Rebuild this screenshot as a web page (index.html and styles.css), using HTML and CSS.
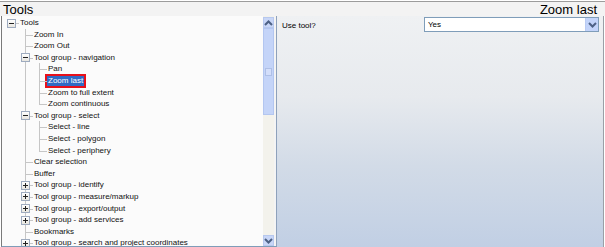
FILE: index.html
```html
<!DOCTYPE html>
<html>

<head>
    <meta charset="UTF-8">
    <title>Tools</title>
    <link rel="stylesheet" href="styles.css">
</head>

<body>
    <div class="window">
        <div class="header">
            <span>Tools</span>
            <span>Zoom last</span>
        </div>
        <div class="main">
            <div class="tree-pane">
                <div class="tree-view">
                    <ul class="tree">
                        <li><span class="exp"></span><span class="row">Tools</span>
                            <ul>
                                <li><span class="row">Zoom In</span></li>
                                <li><span class="row">Zoom Out</span></li>
                                <li><span class="exp"></span><span class="row">Tool group - navigation</span>
                                    <ul>
                                        <li><span class="row">Pan</span></li>
                                        <li><span class="row"><span class="selected">Zoom last</span></span></li>
                                        <li><span class="row">Zoom to full extent</span></li>
                                        <li><span class="row">Zoom continuous</span></li>
                                    </ul>
                                </li>
                                <li><span class="exp"></span><span class="row">Tool group - select</span>
                                    <ul>
                                        <li><span class="row">Select - line</span></li>
                                        <li><span class="row">Select - polygon</span></li>
                                        <li><span class="row">Select - periphery</span></li>
                                    </ul>
                                </li>
                                <li><span class="row">Clear selection</span></li>
                                <li><span class="row">Buffer</span></li>
                                <li><span class="exp plus"></span><span class="row">Tool group - identify</span></li>
                                <li><span class="exp plus"></span><span class="row">Tool group - measure/markup</span></li>
                                <li><span class="exp plus"></span><span class="row">Tool group - export/output</span></li>
                                <li><span class="exp plus"></span><span class="row">Tool group - add services</span></li>
                                <li><span class="row">Bookmarks</span></li>
                                <li class="more"><span class="exp plus"></span><span class="row">Tool group - search and project coordinates</span></li>
                            </ul>
                        </li>
                    </ul>
                </div>
                <div class="scrollbar">
                    <div class="sb-btn">
                        <svg width="9" height="6" viewBox="0 0 9 6"><polyline points="1,5 4.5,1.5 8,5" fill="none" stroke="#4d6185" stroke-width="2"/></svg>
                    </div>
                    <div class="sb-thumb"><span class="grip"></span></div>
                    <div class="sb-track"></div>
                    <div class="sb-btn">
                        <svg width="9" height="6" viewBox="0 0 9 6"><polyline points="1,1 4.5,4.5 8,1" fill="none" stroke="#4d6185" stroke-width="2"/></svg>
                    </div>
                </div>
            </div>
            <div class="props">
                <div class="prop-row">
                    <span class="prop-label">Use tool?</span>
                    <div class="combo">
                        <span class="combo-value">Yes</span>
                        <span class="combo-btn">
                            <svg width="9" height="6" viewBox="0 0 9 6"><polyline points="1,1 4.5,4.5 8,1" fill="none" stroke="#4d6185" stroke-width="2"/></svg>
                        </span>
                    </div>
                </div>
            </div>
        </div>
    </div>
</body>

</html>
```

FILE: styles.css
```css
body {
    margin: 0;
    background-color: #fff;
    font-family: "Liberation Sans", Arial, sans-serif;
}

.window {
    width: 605px;
    height: 247px;
    padding-top: 1px;
    box-sizing: border-box;
    display: flex;
    flex-direction: column;
    overflow: hidden;
}

.header {
    height: 14px;
    border-top: 1px solid #9c9c9c;
    background-color: #f3f3f3;
    display: flex;
    justify-content: space-between;
    align-items: center;
    padding: 0 8px 0 3px;
    font-size: 13px;
    color: #000;
}

.main {
    flex: 1;
    display: flex;
    min-height: 0;
}

.tree-pane {
    width: 274px;
    margin-left: 1px;
    border-left: 1px solid #7a7a7a;
    border-right: 1px solid #8ea1bb;
    border-bottom: 1px solid #7f9db9;
    background-color: #fbfbfb;
    display: flex;
}

.tree-view {
    flex: 1;
    overflow: hidden;
    padding: 1px 0 0 3px;
    font-size: 8px;
    color: #111;
}

.tree,
.tree ul {
    list-style: none;
    margin: 0;
    padding: 0;
}

.tree li {
    position: relative;
    padding-left: 14px;
}

.tree li::before {
    content: "";
    position: absolute;
    left: 6px;
    top: 6px;
    width: 8px;
    border-top: 1px solid #c6c6c6;
}

.tree ul > li::after {
    content: "";
    position: absolute;
    left: 6px;
    top: 0;
    bottom: 0;
    border-left: 1px solid #c6c6c6;
}

.tree ul > li:last-child::after {
    bottom: auto;
    height: 6px;
}

.tree ul > li.more::after {
    height: auto;
    bottom: -4px;
}

.row {
    display: block;
    height: 11.6px;
    line-height: 11.6px;
    padding-left: 1px;
    white-space: nowrap;
}

.exp {
    position: absolute;
    left: 2px;
    top: 1.5px;
    width: 7px;
    height: 7px;
    border: 1px solid #9eabbf;
    background: linear-gradient(#fff, #e8e6df);
    z-index: 1;
}

.exp::after {
    content: "";
    position: absolute;
    left: 1px;
    top: 3px;
    width: 5px;
    height: 1px;
    background-color: #222;
}

.exp.plus::before {
    content: "";
    position: absolute;
    left: 3px;
    top: 1px;
    width: 1px;
    height: 5px;
    background-color: #222;
}

.selected {
    display: inline-block;
    margin-left: -1px;
    padding: 0 1px;
    line-height: 10px;
    background-color: #316ac5;
    color: #fff;
    outline: 2px solid #e8101a;
}

.scrollbar {
    width: 11px;
    border-right: 2px solid #f4f4f4;
    background-color: #f3f2ec;
    display: flex;
    flex-direction: column;
    padding-top: 1px;
}

.sb-btn {
    height: 11px;
    background-color: #c8d6f7;
    border: 1px solid #b7c8ee;
    box-sizing: border-box;
    display: flex;
    align-items: center;
    justify-content: center;
}

.sb-thumb {
    height: 87px;
    background-color: #c4d4f8;
    border: 1px solid #b3c6f0;
    box-sizing: border-box;
    display: flex;
    align-items: center;
    justify-content: center;
}

.grip {
    width: 5px;
    height: 6px;
    border: 1px solid #aebfe6;
    background-color: #d3defa;
}

.sb-track {
    flex: 1;
}

.props {
    flex: 1;
    margin-right: 1px;
    border-right: 1px solid #9a9fa6;
    background: linear-gradient(#eff1f3 0%, #e7eaee 35%, #d2dbe7 65%, #c1cfe4 100%);
    padding: 1px 4px 0 5px;
    font-size: 8px;
}

.prop-row {
    display: flex;
    align-items: center;
    justify-content: space-between;
}

.prop-label {
    color: #000;
    padding-top: 1px;
}

.combo {
    width: 175px;
    height: 15px;
    box-sizing: border-box;
    border: 1px solid #7f9db9;
    background-color: #fff;
    display: flex;
    align-items: center;
}

.combo-value {
    flex: 1;
    padding-left: 3px;
}

.combo-btn {
    width: 13px;
    height: 13px;
    background-color: #c3d4fa;
    border-left: 1px solid #b9cbf3;
    box-sizing: border-box;
    display: flex;
    align-items: center;
    justify-content: center;
}
```
